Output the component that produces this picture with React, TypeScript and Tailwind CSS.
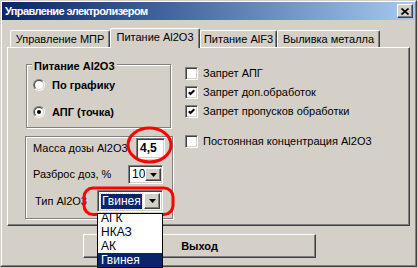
const raised =
  "border border-t-white border-l-white border-r-[#404040] border-b-[#404040] shadow-[inset_-1px_-1px_0_#808080]";
const sunken =
  "border border-t-[#808080] border-l-[#808080] border-r-white border-b-white shadow-[inset_1px_1px_0_#404040,inset_-1px_-1px_0_#d4d0c8]";
const etched = "border border-[#808080] shadow-[inset_1px_1px_0_#fff,1px_1px_0_#fff]";

function Checkbox({ checked }: { checked?: boolean }) {
  return (
    <span className={`w-[13px] h-[13px] shrink-0 bg-white flex items-center justify-center ${sunken}`}>
      {checked && (
        <svg width="7" height="7" viewBox="0 0 7 7">
          <polyline points="0.8,3.2 2.5,5 6.3,1.2" fill="none" stroke="#000" strokeWidth="2" />
        </svg>
      )}
    </span>
  );
}

function Radio({ checked }: { checked?: boolean }) {
  return (
    <span className="w-[12px] h-[12px] shrink-0 rounded-full flex border border-t-[#808080] border-l-[#808080] border-r-white border-b-white">
      <span className="flex-1 rounded-full bg-white flex items-center justify-center border border-t-[#404040] border-l-[#404040] border-r-[#d4d0c8] border-b-[#d4d0c8]">
        {checked && <span className="w-[4px] h-[4px] rounded-full bg-black" />}
      </span>
    </span>
  );
}

function DownBtn() {
  return (
    <span className={`w-[16px] h-full shrink-0 bg-[#d4d0c8] flex items-center justify-center ${raised}`}>
      <svg width="7" height="4" viewBox="0 0 7 4">
        <path d="M0 0h7L3.5 4z" fill="#000" />
      </svg>
    </span>
  );
}

function CheckRow({ checked, label }: { checked?: boolean; label: string }) {
  return (
    <div className="flex items-center gap-[5px] h-[13px]">
      <Checkbox checked={checked} />
      <span className="whitespace-nowrap">{label}</span>
    </div>
  );
}

export default function App() {
  return (
    <div className="relative w-[418px] h-[268px] bg-[#d4d0c8] overflow-hidden font-['Liberation_Sans',Arial,sans-serif] text-[11px] leading-[13px] text-black">
      <div className="w-[417px] h-[267px] flex flex-col border border-t-[#d4d0c8] border-l-[#d4d0c8] border-r-[#404040] border-b-[#404040]">
        <div className="flex-1 flex flex-col border border-t-white border-l-white border-r-[#808080] border-b-[#808080]">
          {/* title bar */}
          <div className="h-[18px] flex items-center pl-[3px] pr-[2px] bg-gradient-to-r from-[#0a246a] to-[#a6caf0]">
            <span className="font-bold text-white whitespace-nowrap tracking-[-0.6px]">Управление электролизером</span>
            <span className={`ml-auto w-[16px] h-[14px] bg-[#d4d0c8] flex items-center justify-center ${raised}`}>
              <svg width="8" height="7" viewBox="0 0 8 7">
                <path d="M0.5 0.5L7.5 6.5M7.5 0.5L0.5 6.5" stroke="#000" strokeWidth="1.6" />
              </svg>
            </span>
          </div>

          <div className="px-[5px] flex flex-col">
            {/* tabs */}
            <div className="mt-[8px] h-[19px] flex items-end pl-[3px]">
              <div className="w-[100px] h-[17px] flex items-center justify-center rounded-t-[2px] border-l border-t border-white border-r border-r-[#404040] shadow-[inset_-1px_0_0_#808080]">
                Управление МПР
              </div>
              <div className="relative z-10 w-[90px] h-[20px] -mb-[1px] pb-[2px] bg-[#d4d0c8] flex items-center justify-center rounded-t-[2px] border-l border-t border-white border-r border-r-[#404040] shadow-[inset_-1px_0_0_#808080]">
                Питание Al2O3
              </div>
              <div className="w-[77px] h-[17px] flex items-center justify-center rounded-t-[2px] border-l border-t border-white border-r border-r-[#404040] shadow-[inset_-1px_0_0_#808080]">
                Питание AlF3
              </div>
              <div className="w-[103px] h-[17px] flex items-center justify-center rounded-t-[2px] border-l border-t border-white border-r border-r-[#404040] shadow-[inset_-1px_0_0_#808080]">
                Выливка металла
              </div>
            </div>

            {/* panel */}
            <div className="h-[179px] flex border-l border-t border-white border-r border-b border-r-[#404040] border-b-[#404040] shadow-[inset_-1px_-1px_0_#808080]">
              <div className="w-[165px] pl-[18px] pt-[16px] flex flex-col">
                <div className={`relative w-[145px] h-[64px] pt-[12px] pl-[6px] flex flex-col gap-[11px] ${etched}`}>
                  <span className="absolute left-[5px] -top-[5px] px-[2px] bg-[#d4d0c8] font-bold whitespace-nowrap">
                    Питание Al2O3
                  </span>
                  <div className="h-[16px] flex items-center gap-[7px]">
                    <Radio />
                    <span className="font-bold">По графику</span>
                  </div>
                  <div className="h-[16px] flex items-center gap-[7px]">
                    <Radio checked />
                    <span className="font-bold">АПГ (точка)</span>
                  </div>
                </div>

                <div className={`mt-[8px] -ml-[1px] w-[148px] h-[83px] pt-[1px] flex flex-col ${etched}`}>
                  <div className="flex items-center pl-[7px]">
                    <span className="whitespace-nowrap">Масса дозы Al2O3</span>
                    <span className={`ml-auto mr-[7px] w-[29px] h-[21px] bg-white flex items-center pl-[3px] font-bold text-[12px] ${sunken}`}>
                      4,5
                    </span>
                  </div>
                  <div className="mt-[6px] flex items-center pl-[7px]">
                    <span className="whitespace-nowrap">Разброс доз, %</span>
                    <span className={`ml-auto mr-[9px] w-[35px] h-[19px] bg-white flex p-[2px] ${sunken}`}>
                      <span className="flex-1 flex items-center pl-[1px] text-[12px]">10</span>
                      <DownBtn />
                    </span>
                  </div>
                  <div className="mt-[6px] flex items-center pl-[9px]">
                    <span className="whitespace-nowrap">Тип Al2O3</span>
                    <span className={`ml-auto mr-[9px] w-[66px] h-[22px] bg-white flex p-[2px] ${sunken}`}>
                      <span className="flex-1 flex items-center pl-[1px]">
                        <span className="h-[15px] px-[1px] flex items-center bg-[#0a246a] text-white text-[12px] outline outline-1 outline-dotted outline-[#f0e080]">
                          Гвинея
                        </span>
                      </span>
                      <DownBtn />
                    </span>
                  </div>
                </div>
              </div>

              <div className="ml-[12px] pt-[19px] flex flex-col gap-[6px]">
                <CheckRow label="Запрет АПГ" />
                <CheckRow checked label="Запрет доп.обработок" />
                <CheckRow checked label="Запрет пропусков обработки" />
                <div className="mt-[11px]">
                  <CheckRow label="Постоянная концентрация Al2O3" />
                </div>
              </div>
            </div>

            {/* exit button */}
            <button className={`mt-[8px] ml-[76px] w-[233px] h-[24px] bg-[#d4d0c8] font-bold flex items-center justify-center ${raised}`}>
              Выход
            </button>
          </div>
        </div>
      </div>

      {/* red annotations */}
      <svg className="absolute inset-0 pointer-events-none" width="418" height="268">
        <ellipse cx="149.5" cy="145" rx="21.5" ry="17" fill="none" stroke="#ff0000" strokeWidth="3" />
        <rect x="84" y="188" width="89" height="26.5" rx="9" fill="none" stroke="#ff0000" strokeWidth="3" />
      </svg>

      {/* open dropdown list */}
      <div className="absolute left-[97px] top-[213px] w-[66px] h-[55px] bg-white border border-black overflow-hidden text-[12px]">
        <div className="-mt-[3px] flex flex-col">
          <div className="h-[14px] pl-[3px] flex items-center">АГК</div>
          <div className="h-[14px] pl-[3px] flex items-center">НКАЗ</div>
          <div className="h-[14px] pl-[3px] flex items-center">АК</div>
          <div className="h-[14px] pl-[3px] flex items-center bg-[#0a246a] text-white">Гвинея</div>
        </div>
      </div>
    </div>
  );
}
